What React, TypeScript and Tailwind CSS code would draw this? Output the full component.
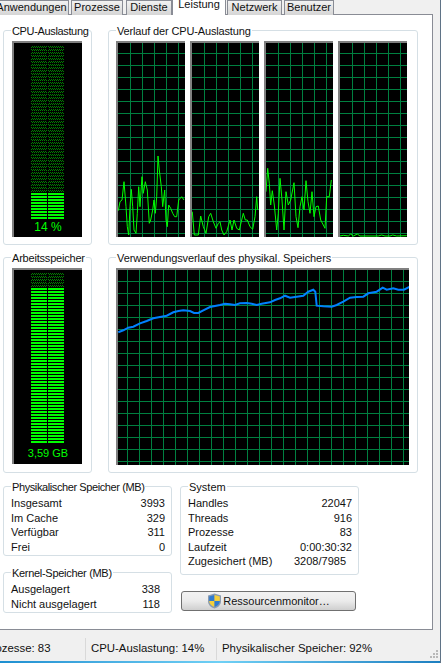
import type { ReactNode } from "react";

const font = "font-['Liberation_Sans','Arial',sans-serif]";

// zoom coordinates were read at 3x, so everything below is divided by 3 when drawn
const cpu1 = [355,632,360,605,366,600,372,545,378,620,382,680,386,705,390,620,394,568,398,620,402,690,408,700,412,640,416,560,420,620,426,530,430,580,436,545,442,570,448,670,452,660,458,630,462,600,466,640,470,590,474,468,478,510,484,560,488,620,494,570,498,660,502,680,506,615,512,625,518,640,524,650,530,650,536,600,545,590,552,600];
const cpu2 = [577,635,583,705,595,705,602,648,610,680,618,700,626,650,632,640,640,665,648,685,655,670,660,665,665,690,672,705,680,695,690,660,696,690,702,660,710,685,718,690,730,640,736,660,742,660,750,680,758,688,765,650,770,590,773,630];
const cpu3 = [798,575,803,505,808,550,812,615,817,572,823,615,830,690,835,640,840,535,846,600,852,690,858,575,865,615,872,600,882,548,888,650,894,683,900,620,906,590,912,630,918,542,924,605,930,640,936,575,942,650,948,620,955,618,962,660,975,685,980,590,988,590,994,540];
const cpu4 = [1020,708,1030,706,1045,708,1052,702,1060,708,1072,702,1080,708,1135,708,1145,705,1155,708,1170,708,1178,705,1190,708,1220,707];
const mem = [355,262,370,256,385,248,400,245,420,235,440,228,460,220,480,216,500,212,520,202,535,198,550,196,570,198,582,204,595,204,610,196,630,186,660,180,675,176,690,178,705,180,720,175,740,174,755,176,770,180,785,176,810,172,825,165,840,160,855,152,870,158,890,155,910,152,925,140,940,134,946,140,950,182,970,184,995,185,1010,180,1030,170,1050,158,1070,156,1090,155,1105,145,1130,140,1148,128,1160,134,1180,130,1195,134,1212,134,1228,126];

function toPoints(raw: number[], originX: number, originY: number) {
  const out: string[] = [];
  for (let i = 0; i < raw.length; i += 2) {
    out.push(`${(raw[i] / 3 - originX).toFixed(1)},${(raw[i + 1] / 3 - originY).toFixed(1)}`);
  }
  return out.join(" ");
}

function Grid({ w, h, firstX, firstY }: { w: number; h: number; firstX: number; firstY: number }) {
  const xs: number[] = [];
  const ys: number[] = [];
  for (let x = firstX; x < w; x += 12) xs.push(x);
  for (let y = firstY; y < h; y += 12) ys.push(y);
  return (
    <g stroke="#008040" strokeWidth="1" shapeRendering="crispEdges">
      {xs.map((x) => (
        <line key={`x${x}`} x1={x + 0.5} y1={0} x2={x + 0.5} y2={h} />
      ))}
      {ys.map((y) => (
        <line key={`y${y}`} x1={0} y1={y + 0.5} x2={w} y2={y + 0.5} />
      ))}
    </g>
  );
}

function CpuGraph({ data, left }: { data: number[]; left: number }) {
  return (
    <div className="w-[69px] h-[196px] bg-black border-t-2 border-l-2 border-[#808080]">
      <svg width="67" height="194" className="block">
        <Grid w={67} h={194} firstX={12} firstY={10} />
        <polyline points={toPoints(data, left, 43)} fill="none" stroke="#00ff00" strokeWidth="1" />
      </svg>
    </div>
  );
}

function Meter({ dim, lit, label, labelClass }: { dim: number; lit: number; label: string; labelClass: string }) {
  const dimRows = Array.from({ length: dim });
  const litRows = Array.from({ length: lit });
  return (
    <div className="w-[70px] h-[196px] bg-black border-t-2 border-l-2 border-[#808080] pt-[3px] flex flex-col">
      <svg width="68" height={(dim + lit) * 3} className="block shrink-0">
        <defs>
          <pattern id={`dither${dim}`} width="2" height="2" patternUnits="userSpaceOnUse">
            <rect x="0" y="0" width="1" height="1" fill="#008000" />
            <rect x="1" y="1" width="1" height="1" fill="#008000" />
          </pattern>
        </defs>
        <g shapeRendering="crispEdges">
          {dimRows.map((_, i) => (
            <g key={i}>
              <rect x="17" y={i * 3} width="16" height="2" fill={`url(#dither${dim})`} />
              <rect x="34" y={i * 3} width="16" height="2" fill={`url(#dither${dim})`} />
            </g>
          ))}
          {litRows.map((_, i) => (
            <g key={i}>
              <rect x="17" y={(dim + i) * 3} width="16" height="2" fill="#00ff00" />
              <rect x="34" y={(dim + i) * 3} width="16" height="2" fill="#00ff00" />
            </g>
          ))}
        </g>
      </svg>
      <div className={`text-center text-[#00ff00] leading-[16px] ${labelClass}`}>{label}</div>
    </div>
  );
}

function GroupBox({
  label,
  labelClass,
  className,
  children,
}: {
  label: string;
  labelClass?: string;
  className: string;
  children: ReactNode;
}) {
  return (
    <div className={`relative border border-[#d5dfe5] rounded-[3px] ${className}`}>
      <span className={`absolute -top-[8px] left-[7px] bg-white px-[1px] text-[11px] leading-[16px] whitespace-nowrap text-[#111] ${labelClass ?? ""}`}>
        {label}
      </span>
      {children}
    </div>
  );
}

function StatRows({ rows }: { rows: [string, string, string?][] }) {
  return (
    <div className="flex flex-col">
      {rows.map(([name, value, cls]) => (
        <div key={name} className="flex justify-between h-[14.5px] items-center text-[11px] text-[#111] whitespace-nowrap">
          <span>{name}</span>
          <span className={cls}>{value}</span>
        </div>
      ))}
    </div>
  );
}

function Shield() {
  return (
    <svg width="15" height="16" viewBox="0 0 15 16" className="shrink-0">
      <path d="M7.5 0.5 L14 2.5 V8 C14 12 11 14.5 7.5 15.5 C4 14.5 1 12 1 8 V2.5 Z" fill="#8a9bb0" />
      <path d="M7.5 2 L7.5 8 L2.2 8 V3.5 Z" fill="#2f7bd0" />
      <path d="M7.5 2 L12.8 3.5 V8 H7.5 Z" fill="#f5cf3a" />
      <path d="M2.2 8 H7.5 V14 C4.5 13 2.4 11 2.2 8 Z" fill="#f5cf3a" />
      <path d="M7.5 8 H12.8 C12.6 11 10.5 13 7.5 14 Z" fill="#2f7bd0" />
    </svg>
  );
}

const tabBase =
  "h-[15px] border border-b-0 border-[#898c95] bg-gradient-to-b from-[#f2f2f2] to-[#d5d5d5] text-[11px] leading-[12px] flex items-start justify-center text-[#111] shrink-0";

export default function App() {
  return (
    <div className={`w-[441px] h-[663px] overflow-hidden flex flex-col bg-[#f0f0f0] border-r border-[#5f7386] ${font}`}>
      {/* tabs, first one runs off the left edge */}
      <div className="relative z-10 flex h-[15px] -ml-[6px] -mb-[1px]">
        <div className={`${tabBase} w-[75px] mr-[2px]`}>Anwendungen</div>
        <div className={`${tabBase} w-[52px] mr-[3px]`}>Prozesse</div>
        <div className={`${tabBase} w-[46px]`}>Dienste</div>
        <div className="h-[15px] w-[54px] bg-white border-x border-[#898c95] text-[11px] leading-[9px] text-center text-[#111] shrink-0">
          Leistung
        </div>
        <div className={`${tabBase} w-[55px] ml-[1px] mr-[2px]`}>Netzwerk</div>
        <div className={`${tabBase} w-[50px]`}>Benutzer</div>
      </div>

      {/* panel */}
      <div className="w-[433px] h-[616px] shrink-0 bg-white border-t border-r border-b border-[#898c95] pl-[3px] pt-[15px]">
        <div className="flex gap-[16px]">
          <GroupBox label="CPU-Auslastung" labelClass="tracking-[-0.35px]" className="w-[89px] h-[215px] pt-[10px] pl-[8px]">
            <Meter dim={49} lit={9} label="14 %" labelClass="text-[12px] -mt-[1px]" />
          </GroupBox>
          <GroupBox label="Verlauf der CPU-Auslastung" labelClass="tracking-[-0.15px]" className="w-[310px] h-[215px] pt-[10px] pl-[7px]">
            <div className="flex gap-[5px]">
              <CpuGraph data={cpu1} left={118} />
              <CpuGraph data={cpu2} left={192} />
              <CpuGraph data={cpu3} left={266} />
              <CpuGraph data={cpu4} left={340} />
            </div>
          </GroupBox>
        </div>

        <div className="flex gap-[16px] mt-[12px]">
          <GroupBox label="Arbeitsspeicher" labelClass="tracking-[-0.2px]" className="w-[89px] h-[216px] pt-[10px] pl-[8px]">
            <Meter dim={5} lit={52} label="3,59 GB" labelClass="text-[11px] mt-[1px]" />
          </GroupBox>
          <GroupBox label="Verwendungsverlauf des physikal. Speichers" labelClass="tracking-[-0.1px]" className="w-[310px] h-[216px] pt-[10px] pl-[7px]">
            <div className="w-[293px] h-[197px] bg-black border-t-2 border-l-2 border-[#808080]">
              <svg width="291" height="195" className="block">
                <Grid w={291} h={195} firstX={9} firstY={11} />
                <polyline points={toPoints(mem, 118, 25)} fill="none" stroke="#0080ff" strokeWidth="2" />
              </svg>
            </div>
          </GroupBox>
        </div>

        <div className="flex gap-[8px] mt-[13px]">
          <div className="w-[169px] flex flex-col gap-[16px]">
            <GroupBox label="Physikalischer Speicher (MB)" labelClass="tracking-[-0.4px]" className="h-[70px] pt-[9px] pl-[7px] pr-[6px]">
              <StatRows
                rows={[
                  ["Insgesamt", "3993"],
                  ["Im Cache", "329"],
                  ["Verfügbar", "311"],
                  ["Frei", "0"],
                ]}
              />
            </GroupBox>
            <GroupBox label="Kernel-Speicher (MB)" labelClass="tracking-[-0.3px]" className="h-[41px] pt-[9px] pl-[7px] pr-[11px]">
              <StatRows
                rows={[
                  ["Ausgelagert", "338"],
                  ["Nicht ausgelagert", "118"],
                ]}
              />
            </GroupBox>
          </div>
          <div className="w-[179px] flex flex-col">
            <GroupBox label="System" className="h-[89px] pt-[9px] pl-[7px] pr-[6px]">
              <StatRows
                rows={[
                  ["Handles", "22047"],
                  ["Threads", "916"],
                  ["Prozesse", "83"],
                  ["Laufzeit", "0:00:30:32"],
                  ["Zugesichert (MB)", "3208/7985", "mr-[6px]"],
                ]}
              />
            </GroupBox>
            <button className="mt-[16px] ml-[1px] w-[175px] h-[20px] border border-[#707070] rounded-[3px] bg-gradient-to-b from-[#f2f2f2] via-[#ebebeb] to-[#cfcfcf] flex items-center justify-center gap-[1px] text-[11px] text-[#111]">
              <Shield />
              Ressourcenmonitor…
            </button>
          </div>
        </div>
      </div>

      {/* status bar */}
      <div className="flex-1 flex items-end pb-[1px] text-[11.4px] text-[#111] whitespace-nowrap overflow-hidden">
        <div className="-ml-[20px] w-[106px] pl-[4px] h-[22px] flex items-center border-r border-[#d9d9d9]">Prozesse: 83</div>
        <div className="w-[131px] pl-[5px] h-[22px] flex items-center border-r border-[#d9d9d9]">CPU-Auslastung: 14%</div>
        <div className="pl-[5px] h-[22px] flex items-center">Physikalischer Speicher: 92%</div>
        <svg width="10" height="10" className="ml-auto mr-[1px] mb-[1px] shrink-0">
          <g fill="#b8b8b8">
            <rect x="7" y="1" width="2" height="2" />
            <rect x="4" y="4" width="2" height="2" />
            <rect x="7" y="4" width="2" height="2" />
            <rect x="1" y="7" width="2" height="2" />
            <rect x="4" y="7" width="2" height="2" />
            <rect x="7" y="7" width="2" height="2" />
          </g>
        </svg>
      </div>
      <div className="h-[2px] shrink-0 bg-gradient-to-r from-[#1c8fd0] via-[#6fd0f5] to-[#1c7fc0]" />
    </div>
  );
}
